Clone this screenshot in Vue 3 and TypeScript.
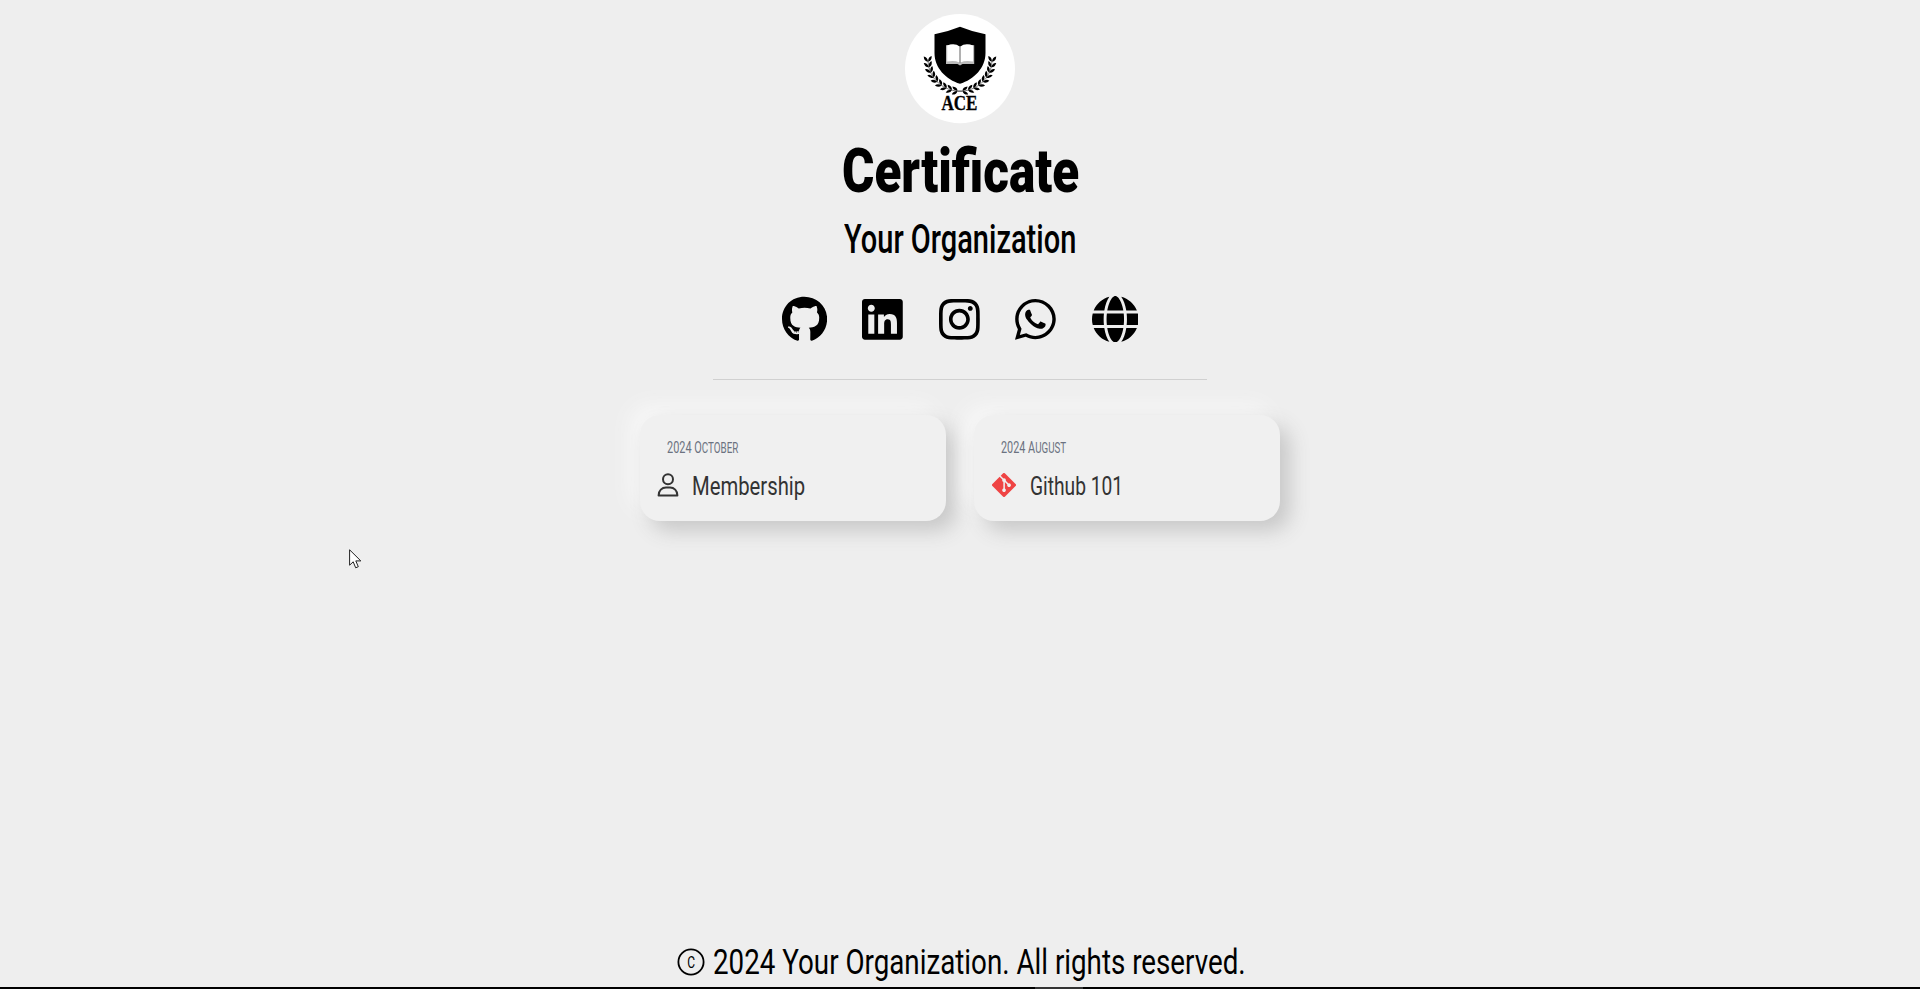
<script setup lang="ts">
interface Shape { label: string; w: number; d: string }
interface Card { year: string; month: string; title: string; icon: 'person' | 'git'; dateWidth: number; width: number }

const links: Shape[] = [
  { label: 'GitHub', w: 496, d: 'M165.9 397.4c0 2-2.3 3.6-5.2 3.6-3.3.3-5.6-1.3-5.6-3.6 0-2 2.3-3.6 5.2-3.6 3-.3 5.6 1.3 5.6 3.6zm-31.1-4.5c-.7 2 1.3 4.3 4.3 4.9 2.6 1 5.6 0 6.2-2s-1.3-4.3-4.3-5.2c-2.6-.7-5.5.3-6.2 2.3zm44.2-1.7c-2.9.7-4.9 2.6-4.6 4.9.3 2 2.9 3.3 5.9 2.6 2.9-.7 4.9-2.6 4.6-4.6-.3-1.9-3-3.2-5.9-2.9zM244.8 8C106.1 8 0 113.3 0 252c0 110.9 69.8 205.8 169.5 239.2 12.8 2.3 17.3-5.6 17.3-12.1 0-6.2-.3-40.4-.3-61.4 0 0-70 15-84.7-29.8 0 0-11.4-29.1-27.8-36.6 0 0-22.9-15.7 1.6-15.4 0 0 24.9 2 38.6 25.8 21.9 38.6 58.6 27.5 72.9 20.9 2.3-16 8.8-27.1 16-33.7-55.9-6.2-112.3-14.3-112.3-110.5 0-27.5 7.6-41.3 23.6-58.9-2.6-6.5-11.1-33.3 2.6-67.9 20.9-6.5 69 27 69 27 20-5.6 41.5-8.5 62.8-8.5s42.8 2.9 62.8 8.5c0 0 48.1-33.6 69-27 13.7 34.7 5.2 61.4 2.6 67.9 16 17.7 25.8 31.5 25.8 58.9 0 96.5-58.9 104.2-114.8 110.5 9.2 7.9 17 22.9 17 46.4 0 33.7-.3 75.4-.3 83.6 0 6.5 4.6 14.4 17.3 12.1C428.2 457.8 496 362.9 496 252 496 113.3 383.5 8 244.8 8z' },
  { label: 'LinkedIn', w: 448, d: 'M416 32H31.9C14.3 32 0 46.5 0 64.3v383.4C0 465.5 14.3 480 31.9 480H416c17.6 0 32-14.5 32-32.3V64.3c0-17.8-14.4-32.3-32-32.3zM135.4 416H69V202.2h66.5V416zm-33.2-243c-21.3 0-38.5-17.3-38.5-38.5S80.9 96 102.2 96c21.2 0 38.5 17.3 38.5 38.5 0 21.3-17.2 38.5-38.5 38.5zm282.1 243h-66.4V312c0-24.8-.5-56.7-34.5-56.7-34.6 0-39.9 27-39.9 54.9V416h-66.4V202.2h63.7v29.2h.9c8.9-16.8 30.6-34.5 62.9-34.5 67.2 0 79.7 44.3 79.7 101.9V416z' },
  { label: 'Instagram', w: 448, d: 'M224.1 141c-63.6 0-114.9 51.3-114.9 114.9s51.3 114.9 114.9 114.9S339 319.5 339 255.9 287.7 141 224.1 141zm0 189.6c-41.1 0-74.7-33.5-74.7-74.7s33.5-74.7 74.7-74.7 74.7 33.5 74.7 74.7-33.6 74.7-74.7 74.7zm146.4-194.3c0 14.9-12 26.8-26.8 26.8-14.9 0-26.8-12-26.8-26.8s12-26.8 26.8-26.8 26.8 12 26.8 26.8zm76.1 27.2c-1.7-35.9-9.9-67.7-36.2-93.9-26.2-26.2-58-34.4-93.9-36.2-37-2.1-147.9-2.1-184.9 0-35.8 1.7-67.6 9.9-93.9 36.1s-34.4 58-36.2 93.9c-2.1 37-2.1 147.9 0 184.9 1.7 35.9 9.9 67.7 36.2 93.9s58 34.4 93.9 36.2c37 2.1 147.9 2.1 184.9 0 35.9-1.7 67.7-9.9 93.9-36.2 26.2-26.2 34.4-58 36.2-93.9 2.1-37 2.1-147.8 0-184.8zM398.8 388c-7.8 19.6-22.9 34.7-42.6 42.6-29.5 11.7-99.5 9-132.1 9s-102.7 2.6-132.1-9c-19.6-7.8-34.7-22.9-42.6-42.6-11.7-29.5-9-99.5-9-132.1s-2.6-102.7 9-132.1c7.8-19.6 22.9-34.7 42.6-42.6 29.5-11.7 99.5-9 132.1-9s102.7-2.6 132.1 9c19.6 7.8 34.7 22.9 42.6 42.6 11.7 29.5 9 99.5 9 132.1s2.7 102.7-9 132.1z' },
  { label: 'WhatsApp', w: 448, d: 'M380.9 97.1C339 55.1 283.2 32 223.9 32c-122.4 0-222 99.6-222 222 0 39.1 10.2 77.3 29.6 111L0 480l117.7-30.9c32.4 17.7 68.9 27 106.1 27h.1c122.3 0 224.1-99.6 224.1-222 0-59.3-25.2-115-67.1-157zm-157 341.6c-33.2 0-65.7-8.9-94-25.7l-6.7-4-69.8 18.3L72 359.2l-4.4-7c-18.5-29.4-28.2-63.3-28.2-98.2 0-101.7 82.8-184.5 184.6-184.5 49.3 0 95.6 19.2 130.4 54.1 34.8 34.9 56.2 81.2 56.1 130.5 0 101.8-84.9 184.6-186.6 184.6zm101.2-138.2c-5.5-2.8-32.8-16.2-37.9-18-5.1-1.9-8.8-2.8-12.5 2.8-3.7 5.6-14.3 18-17.6 21.8-3.2 3.7-6.5 4.2-12 1.4-32.6-16.3-54-29.1-75.5-66-5.7-9.8 5.7-9.1 16.3-30.3 1.8-3.7.9-6.9-.5-9.7-1.4-2.8-12.5-30.1-17.1-41.2-4.5-10.8-9.1-9.3-12.5-9.5-3.2-.2-6.9-.2-10.6-.2-3.7 0-9.7 1.4-14.8 6.9-5.1 5.6-19.4 19-19.4 46.3 0 27.3 19.9 53.7 22.6 57.4 2.8 3.7 39.1 59.7 94.8 83.8 35.2 15.2 49 16.5 66.6 13.9 10.7-1.6 32.8-13.4 37.4-26.4 4.6-13 4.6-24.1 3.2-26.4-1.3-2.5-5-3.9-10.5-6.6z' },
  { label: 'Website', w: 512, d: 'M352 256c0 22.2-1.2 43.6-3.3 64H163.3c-2.2-20.4-3.3-41.8-3.3-64s1.2-43.6 3.3-64H348.7c2.2 20.4 3.3 41.8 3.3 64zm28.8-64H503.9c5.3 20.5 8.1 41.9 8.1 64s-2.8 43.5-8.1 64H380.8c2.1-20.6 3.2-42 3.2-64s-1.1-43.4-3.2-64zm112.6-32H376.7c-10-63.9-29.8-117.4-55.3-151.6c78.3 20.7 142 77.5 171.9 151.6zm-149.1 0H167.7c6.1-36.4 15.5-68.6 27-94.7c10.5-23.6 22.2-40.7 33.5-51.5C239.4 3.2 248.7 0 256 0s16.6 3.2 27.8 13.8c11.3 10.8 23 27.9 33.5 51.5c11.6 26 20.9 58.2 27 94.7zm-209 0H18.6C48.6 85.9 112.2 29.1 190.6 8.4C165.1 42.6 145.3 96.1 135.3 160zM8.1 192H131.2c-2.1 20.6-3.2 42-3.2 64s1.1 43.4 3.2 64H8.1C2.8 299.5 0 278.1 0 256s2.8-43.5 8.1-64zM194.7 446.6c-11.6-26-20.9-58.2-27-94.6H344.3c-6.1 36.4-15.5 68.6-27 94.6c-10.5 23.6-22.2 40.7-33.5 51.5C272.6 508.8 263.3 512 256 512s-16.6-3.2-27.8-13.8c-11.3-10.8-23-27.9-33.5-51.5zM135.3 352c10 63.9 29.8 117.4 55.3 151.6C112.2 482.9 48.6 426.1 18.6 352H135.3zm358.1 0c-30 74.1-93.6 130.9-171.9 151.6c25.5-34.2 45.2-87.7 55.3-151.6H493.4z' },
]

const iconSize = 46.6

const cards: Card[] = [
  { year: '2024', month: 'October', title: 'Membership', icon: 'person', dateWidth: 71, width: 113 },
  { year: '2024', month: 'August', title: 'Github 101', icon: 'git', dateWidth: 65, width: 93 },
]

// Laurel leaves, in pairs along a quarter arc; the right branch mirrors the left.
const leaves = Array.from({ length: 9 }, (_, i) => {
  const deg = 176 - i * 10.2
  const a = (deg * Math.PI) / 180
  return { x: 55 + 32 * Math.cos(a), y: 45.5 + 31.5 * Math.sin(a), r: deg + 90 }
})

// Condenses a line of text horizontally so that it fills the given width.
const vFit = {
  mounted(el: HTMLElement, binding: { value: number }) {
    const apply = () => {
      el.style.transform = `scaleX(${binding.value / el.offsetWidth})`
      el.parentElement!.style.width = `${binding.value}px`
    }
    apply()
    document.fonts.ready.then(apply)
  },
}
</script>

<template>
  <div class="page">
    <header>
      <svg class="logo" viewBox="0 0 110 110">
        <ellipse cx="55" cy="54.6" rx="55" ry="54.6" fill="#fff" />
        <path d="M55 12.7Q68 18 80.5 20.2V39C80.5 54 69 65.5 55 69.8C41 65.5 29.5 54 29.5 39V20.2Q42 18 55 12.7Z" />
        <path d="M41 31.2Q50 30 55 32.8Q60 30 69.2 31.2V50H57.5L55 51.4L52.5 50H41Z" fill="#bbb" />
        <path d="M42.2 31.4Q50 28.8 54.6 32.4V48.4Q49 46.2 42.2 47.6ZM55.4 32.4Q60 28.8 68 31.4V47.6Q61 46.2 55.4 48.4Z" fill="#fff" />
        <path d="M55 32.5V49" stroke="#555" stroke-width=".7" />
        <g v-for="side in [1, -1]" :key="side" :transform="`translate(${side === 1 ? 0 : 110} 0) scale(${side} 1)`">
          <path d="M23 47.5A32 31.5 0 0 0 57 77.2" fill="none" stroke="#222" stroke-width=".6" />
          <g v-for="(l, i) in leaves" :key="i" :transform="`translate(${l.x} ${l.y}) rotate(${l.r})`">
            <path d="M0 0Q.6 -4 5.4 -4Q4.8 -.4 0 0ZM0 0Q.6 4 5.4 4Q4.8 .4 0 0Z" />
          </g>
        </g>
        <text x="36.5" y="96.2" font-size="20" textLength="36" lengthAdjust="spacingAndGlyphs">ACE</text>
      </svg>
      <h1><span v-fit="237" class="fit">Certificate</span></h1>
      <h2><span v-fit="232" class="fit">Your Organization</span></h2>
    </header>

    <nav>
      <a v-for="l in links" :key="l.label" :aria-label="l.label">
        <svg :height="iconSize" :width="(l.w * iconSize) / 512" :viewBox="`0 0 ${l.w} 512`"><path :d="l.d" /></svg>
      </a>
    </nav>

    <hr />

    <main>
      <article v-for="c in cards" :key="c.title">
        <div class="date">
          <span v-fit="c.dateWidth" class="fit">{{ c.year }} {{ c.month[0] }}<span class="small">{{ c.month.slice(1) }}</span></span>
        </div>
        <div class="row" :class="c.icon">
          <svg v-if="c.icon === 'person'" width="22" height="24" viewBox="0 0 22 24" fill="none" stroke="#333" stroke-width="2">
            <circle cx="11" cy="6.2" r="5" />
            <path d="M1.6 22.4C1.6 17.5 5 14.6 9 14.6H13C17 14.6 20.4 17.5 20.4 22.4Z" stroke-linejoin="round" />
          </svg>
          <svg v-else width="24" height="24" viewBox="0 32 448 448" fill="#ef4444">
            <path d="M439.55 236.05L244 40.45a28.87 28.87 0 0 0-40.81 0l-40.66 40.63 51.52 51.52c27.06-9.14 52.68 16.77 43.39 43.68l49.66 49.66c34.23-11.8 61.18 31 35.47 56.69-26.49 26.49-70.21-2.87-56-37.34L240.22 199v121.85c25.3 12.54 22.26 41.85 9.08 55a34.34 34.34 0 0 1-48.55 0c-17.57-17.6-11.07-46.91 11.25-56v-123c-20.8-8.51-24.6-30.74-18.64-45L142.57 101 8.45 235.14a28.86 28.86 0 0 0 0 40.81l195.61 195.6a28.86 28.86 0 0 0 40.8 0l194.69-194.69a28.86 28.86 0 0 0 0-40.81z" />
          </svg>
          <div class="title"><span v-fit="c.width" class="fit">{{ c.title }}</span></div>
        </div>
      </article>
    </main>

    <footer>
      <svg class="mark" width="28" height="28" viewBox="0 0 28 28">
        <circle cx="14" cy="14" r="12.6" fill="none" stroke="#000" stroke-width="1.8" />
        <text x="10.2" y="20" font-size="16.5" textLength="7.8" lengthAdjust="spacingAndGlyphs">C</text>
      </svg>
      <div><span v-fit="533" class="fit">2024 Your Organization. All rights reserved.</span></div>
    </footer>

    <div class="edge"><i /></div>
    <svg class="cursor" width="13" height="20" viewBox="0 0 13 20">
      <path d="M.6 .8V16.2L4.2 12.8L6.7 18.8L9.3 17.7L6.8 11.9H11.8Z" fill="#fff" stroke="#222" stroke-width="1" />
    </svg>
  </div>
</template>

<style>
body { margin: 0; background: #eee; }
</style>

<style scoped>
.page {
  position: relative;
  box-sizing: border-box;
  height: 989px;
  padding-top: 14px;
  display: flex;
  flex-direction: column;
  align-items: center;
  overflow: hidden;
  background: #eee;
  color: #000;
  font-family: Roboto, "Liberation Sans", sans-serif;
}
svg { display: block; flex: none; }
.fit { display: inline-block; white-space: nowrap; transform-origin: 0 50%; }
header { display: flex; flex-direction: column; align-items: center; }
.logo { width: 110px; height: 110px; }
.logo text { font-family: "Liberation Serif", serif; font-weight: 700; stroke: #000; stroke-width: .3; }
h1 { margin: 17px 0 0; height: 60px; font-size: 61.5px; line-height: 60px; font-weight: 900; }
h2 { margin: 14px 0 0; height: 48px; font-size: 41px; line-height: 48px; font-weight: 500; }
nav { display: flex; align-items: center; gap: 35.7px; height: 48px; margin-top: 32px; }
hr { width: 494px; height: 1px; margin: 36px 0 35px; border: 0; background: #d0d0d0; flex: none; }
main { display: flex; gap: 28px; }
article {
  box-sizing: border-box;
  width: 306px;
  height: 106px;
  padding: 23px 18px 0 17px;
  border-radius: 20px;
  background: #f0f0f0;
  box-shadow: 10px 10px 20px #c8c8c8, -10px -10px 20px #f7f7f7;
}
.date { height: 20px; margin-left: 10px; font-size: 15.7px; line-height: 20px; color: #6b7280; }
.small { font-size: .9em; text-transform: uppercase; }
.row { display: flex; align-items: center; height: 32px; margin-top: 12px; gap: 13px; }
.row.git { margin-left: 1px; gap: 14px; }
.row > svg { margin-top: -3px; }
.title { height: 32px; font-size: 26px; line-height: 32px; color: #333; }
footer { display: flex; align-items: center; gap: 8px; height: 44px; margin-top: auto; margin-bottom: 5px; margin-left: 2px; font-size: 35.5px; line-height: 44px; }
footer > div { height: 44px; }
.edge { position: absolute; left: 0; bottom: 0; width: 100%; height: 2px; background: #000; }
.edge i { display: block; width: 48px; height: 2px; margin-left: 1035px; background: #333; }
.cursor { position: absolute; left: 349px; top: 549px; }
</style>
